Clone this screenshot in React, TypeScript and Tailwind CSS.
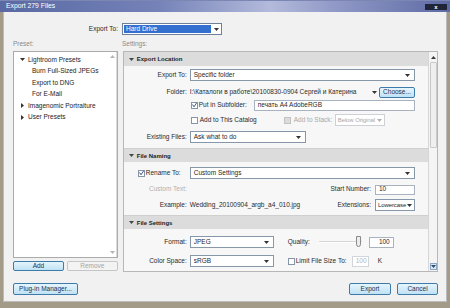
import React from "react";

function Arrow({ color = "#2a2a2a" }: { color?: string }) {
  return (
    <svg width="5" height="3" viewBox="0 0 5 3" className="shrink-0">
      <polygon points="0,0 5,0 2.5,3" fill={color} />
    </svg>
  );
}

function Dropdown({
  text,
  className = "",
  disabled = false,
  tight = false,
}: {
  text: string;
  className?: string;
  disabled?: boolean;
  tight?: boolean;
}) {
  return (
    <div
      className={`flex items-center justify-between bg-white border ${
        tight ? "pl-[2px] pr-[2px] text-[6px] tracking-[-0.1px]" : "pl-[3px] pr-[4px]"
      } ${
        disabled
          ? "border-[#cdd1d5] text-[#a8a8a8]"
          : "border-[#8797aa] text-[#1f1f1f]"
      } ${className}`}
    >
      <span className="whitespace-nowrap">{text}</span>
      <Arrow color={disabled ? "#b0b0b0" : "#333"} />
    </div>
  );
}

function Check({ checked = false, disabled = false }: { checked?: boolean; disabled?: boolean }) {
  return (
    <span
      className={`w-[7px] h-[7px] border flex items-center justify-center shrink-0 ${
        disabled ? "border-[#c2c2c2] bg-[#dcdcdc]" : "border-[#8695a8] bg-white"
      }`}
    >
      {checked && (
        <svg width="6" height="6" viewBox="0 0 6 6">
          <path d="M0.6 2.4 L2.4 5.2 L5.6 0.4" stroke="#2d4e86" strokeWidth="1.1" fill="none" />
        </svg>
      )}
    </span>
  );
}

function Btn({
  children,
  className = "",
  disabled = false,
}: {
  children: React.ReactNode;
  className?: string;
  disabled?: boolean;
}) {
  return (
    <button
      type="button"
      className={`flex items-center justify-center border rounded-[2px] leading-none ${
        disabled
          ? "border-[#c6c6c6] bg-[#f3f3f3] text-[#a6a6a6]"
          : "border-[#3d7bab] bg-[linear-gradient(#e6f5fd,#bfe2f5)] text-[#1d3150]"
      } ${className}`}
    >
      {children}
    </button>
  );
}

function Header({ title, top = false }: { title: string; top?: boolean }) {
  return (
    <div
      className={`h-[14px] flex items-center pl-[5px] bg-[#dcdcdc] font-bold text-[#222] ${
        top ? "" : "border-t border-[#cfcfcf]"
      }`}
    >
      <Arrow color="#444" />
      <span className="ml-[3px] text-[6px]">{title}</span>
    </div>
  );
}

function Row({
  label,
  children,
  className = "",
  labelClass = "justify-end",
}: {
  label: React.ReactNode;
  children?: React.ReactNode;
  className?: string;
  labelClass?: string;
}) {
  return (
    <div className={`flex items-center ${className}`}>
      <div className={`w-[63px] shrink-0 flex items-center ${labelClass}`}>{label}</div>
      <div className="ml-[3px] flex items-center flex-1 h-full">{children}</div>
    </div>
  );
}

export default function App() {
  return (
    <main className="w-[450px] h-[308px] overflow-hidden bg-[#a39a87] flex flex-col font-['Liberation_Sans',Arial,sans-serif] text-[6.5px] leading-none text-[#2a2a2a]">
      {/* title bar */}
      <div className="h-[12px] shrink-0 flex items-center justify-between pl-[6px] pr-[3px] bg-[linear-gradient(90deg,#5a69a3_0%,#7482b8_35%,#b3badb_60%,#8f98c6_75%,#5d6aa4_100%)] border-t border-[#7c86b2]">
        <span className="text-white text-[6.8px]">Export 279 Files</span>
        <div className="w-[22px] h-[6px] bg-[#1f2436] flex items-center justify-center text-white text-[6px] font-bold">
          x
        </div>
      </div>

      {/* body */}
      <div className="flex-1 mx-[3px] mb-[6px] bg-[#f1f1f1] border border-[#bcbcbc] border-t-0 pl-[8px] pr-[8px] flex flex-col">
        <div className="mt-[11px] h-[12px] flex items-center">
          <div className="w-[106px] text-right">Export To:</div>
          <div className="ml-[4px] w-[100px] h-[12px] border border-[#6f7f97] bg-white flex items-stretch">
            <div className="flex-1 bg-[#3470cf] text-white flex items-center pl-[2px] m-[1px]">Hard Drive</div>
            <div className="w-[9px] flex items-center justify-center">
              <Arrow color="#333" />
            </div>
          </div>
        </div>

        <div className="mt-[5px] h-[9px] flex items-center text-[#8a8a8a]">
          <div className="w-[110px] pl-[1px]">Preset:</div>
          <div>Settings:</div>
        </div>

        <div className="mt-[2px] h-[221px] flex gap-[5px]">
          {/* presets */}
          <div className="w-[105px] ml-[1px] flex flex-col">
            <div className="h-[207px] bg-white border border-[#ababab] flex">
              <div className="flex-1 pt-[2px] text-[#222]">
                <div className="h-[11.5px] flex items-center pl-[6px]">
                  <Arrow color="#333" />
                  <span className="ml-[3px]">Lightroom Presets</span>
                </div>
                <div className="h-[11.5px] flex items-center pl-[18px]">Burn Full-Sized JPEGs</div>
                <div className="h-[11.5px] flex items-center pl-[18px]">Export to DNG</div>
                <div className="h-[11.5px] flex items-center pl-[18px]">For E-Mail</div>
                <div className="h-[11.5px] flex items-center pl-[7px]">
                  <svg width="3" height="5" viewBox="0 0 3 5">
                    <polygon points="0,0 3,2.5 0,5" fill="#333" />
                  </svg>
                  <span className="ml-[4px]">Imagenomic Portraiture</span>
                </div>
                <div className="h-[11.5px] flex items-center pl-[7px]">
                  <svg width="3" height="5" viewBox="0 0 3 5">
                    <polygon points="0,0 3,2.5 0,5" fill="#333" />
                  </svg>
                  <span className="ml-[4px]">User Presets</span>
                </div>
              </div>
              <div className="w-[8px] border-r border-[#dcdcdc] flex flex-col justify-between items-center py-[3px]">
                <svg width="5" height="3" viewBox="0 0 5 3">
                  <polygon points="0,3 5,3 2.5,0" fill="#b5b5b5" />
                </svg>
                <Arrow color="#b5b5b5" />
              </div>
            </div>
            <div className="mt-[3px] h-[10px] flex gap-[3px]">
              <Btn className="flex-1 h-full">Add</Btn>
              <Btn className="flex-1 h-full" disabled>
                Remove
              </Btn>
            </div>
          </div>

          {/* settings */}
          <div className="w-[316px] border border-[#b7b7b7] bg-[#f7f7f7] flex">
            <div className="flex-1 flex flex-col">
              <Header title="Export Location" top />
              <div className="pr-[13px]">
                <Row label="Export To:" className="mt-[3px] h-[12px]">
                  <Dropdown text="Specific folder" className="w-full h-[12px]" />
                </Row>
                <Row label="Folder:" className="mt-[5px] h-[12px]">
                  <span className="flex-1 whitespace-nowrap">I:\Каталоги в работе\20100830-0904 Сергей и Катерина</span>
                  <Arrow color="#333" />
                  <Btn className="ml-[2px] w-[36px] h-[11px]">Choose...</Btn>
                </Row>
                <Row label="" className="mt-[1px] h-[12px]">
                  <span className="ml-[1px]">
                    <Check checked />
                  </span>
                  <span className="ml-[1px] w-[55px]">Put in Subfolder:</span>
                  <div className="flex-1 h-[11px] bg-white border border-[#a9b3bf] flex items-center pl-[3px]">
                    печать A4 AdobeRGB
                  </div>
                </Row>
                <Row label="" className="mt-[3px] h-[12px]">
                  <div className="w-[94px] flex items-center">
                    <span className="ml-[1px]">
                      <Check />
                    </span>
                    <span className="ml-[2px]">Add to This Catalog</span>
                  </div>
                  <Check disabled />
                  <span className="ml-[3px] w-[41px] text-[#a8a8a8]">Add to Stack:</span>
                  <Dropdown text="Below Original" disabled tight className="w-[50px] h-[12px]" />
                </Row>
                <Row label="Existing Files:" className="mt-[5px] h-[12px]">
                  <Dropdown text="Ask what to do" className="w-[116px] h-[12px]" />
                </Row>
              </div>
              <div className="h-[5px]" />

              <Header title="File Naming" />
              <div className="pr-[13px]">
                <Row
                  label={
                    <>
                      <Check checked />
                      <span className="ml-[1px]">Rename To:</span>
                    </>
                  }
                  labelClass="justify-start pl-[14px]"
                  className="mt-[5px] h-[12px]"
                >
                  <Dropdown text="Custom Settings" className="w-full h-[12px]" />
                </Row>
                <Row label={<span className="text-[#b0b0b0]">Custom Text:</span>} className="mt-[5px] h-[11px]">
                  <span className="flex-1" />
                  <span>Start Number:</span>
                  <div className="ml-[4px] w-[40px] h-[10px] bg-white border border-[#a9b3bf] flex items-center pl-[3px]">
                    10
                  </div>
                </Row>
                <Row label="Example:" className="mt-[4px] h-[12px]">
                  <span className="flex-1">Wedding_20100904_argb_a4_010.jpg</span>
                  <span>Extensions:</span>
                  <Dropdown text="Lowercase" tight className="ml-[4px] w-[40px] h-[12px]" />
                </Row>
              </div>
              <div className="h-[4px]" />

              <Header title="File Settings" />
              <div className="pr-[13px]">
                <Row label="Format:" className="mt-[7px] h-[12px]">
                  <Dropdown text="JPEG" className="w-[84px] h-[12px]" />
                  <span className="ml-[14px] w-[31px]">Quality:</span>
                  <div className="relative w-[43px] h-[12px] flex items-center">
                    <div className="w-full h-[2px] bg-[#d6d6d6] border-b border-[#ffffff]" />
                    <div className="absolute right-[1px] top-0 w-[5px] h-[11px] border border-[#8a8a8a] bg-[#ececec] rounded-b-[3px]" />
                  </div>
                  <div className="ml-[7px] w-[25px] h-[11px] bg-white border border-[#a9b3bf] flex items-center justify-end pr-[3px]">
                    100
                  </div>
                </Row>
                <Row label="Color Space:" className="mt-[7px] h-[12px]">
                  <Dropdown text="sRGB" className="w-[84px] h-[12px]" />
                  <span className="ml-[14px]">
                    <Check />
                  </span>
                  <span className="ml-[1px] w-[56px]">Limit File Size To:</span>
                  <div className="w-[17px] h-[11px] bg-white border border-[#d2d6da] text-[#b5b5b5] flex items-center pl-[3px]">
                    100
                  </div>
                  <span className="ml-[9px]">K</span>
                </Row>
              </div>
            </div>

            {/* scrollbar */}
            <div className="w-[9px] border-l border-[#d6d6d6] bg-[#f4f4f4] flex flex-col items-center">
              <div className="h-[10px] flex items-center justify-center">
                <svg width="5" height="3" viewBox="0 0 5 3">
                  <polygon points="0,3 5,3 2.5,0" fill="#3a3a3a" />
                </svg>
              </div>
              <div className="w-[7px] h-[86px] border border-[#c9c9c9] bg-[#efefef] rounded-[1px]" />
              <div className="flex-1" />
              <div className="w-[7px] h-[7px] mb-[1px] border border-[#8aa6c2] bg-[#dbe9f6] flex items-center justify-center">
                <Arrow color="#2c4a70" />
              </div>
            </div>
          </div>
        </div>

        {/* footer */}
        <div className="mt-[11px] h-[12px] flex items-center">
          <Btn className="ml-[1px] w-[65px] h-[12px]">Plug-in Manager...</Btn>
          <div className="flex-1" />
          <Btn className="w-[42px] h-[12px]">Export</Btn>
          <Btn className="ml-[6px] w-[41px] h-[12px]">Cancel</Btn>
        </div>
      </div>
    </main>
  );
}
